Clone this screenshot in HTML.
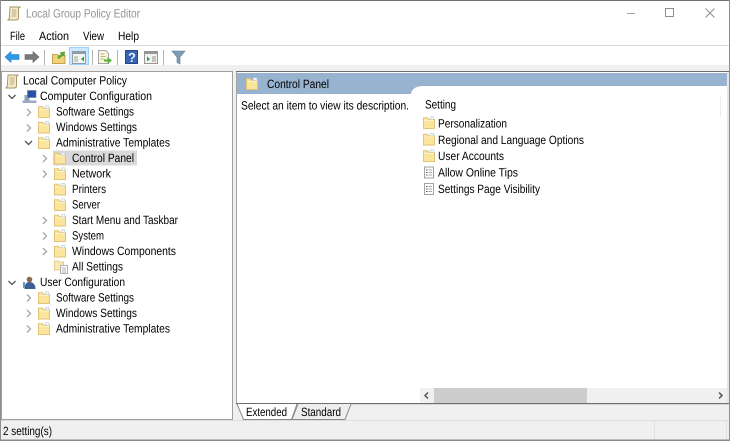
<!DOCTYPE html>
<html><head><meta charset="utf-8"><title>Local Group Policy Editor</title>
<style>
html,body{margin:0;padding:0;background:#fff;width:730px;height:441px;overflow:hidden}
svg{display:block;position:absolute;left:0;top:0;filter:blur(.3px)}
text{font-family:"Liberation Sans",sans-serif;font-size:12px;fill:#000;text-rendering:geometricPrecision}
</style></head><body>
<svg width="730" height="441" viewBox="0 0 730 441" xmlns="http://www.w3.org/2000/svg">
<defs>
<symbol id="f" viewBox="0 0 14 14" width="14" height="14">
<path d="M1.500 12.500V1.800h4l1 1.500h6v9.200z" fill="#fbe49c" stroke="#e0c377"/>
<path d="M8.300 .8h3.500v2.500H8.300z" fill="#f2f7fb" stroke="#c3cfd9" stroke-width=".6"/>
<path d="M2.200 4.400h9.800" stroke="#fdf3cc"/>
</symbol>
<symbol id="d" viewBox="0 0 14 14" width="14" height="14">
<path d="M2.500 1.500h9v11h-9z" fill="#fff" stroke="#a3a3a3"/>
<path d="M4 4.500h1.500M4 7h1.500M4 9.500h1.500" stroke="#555"/>
<path d="M6.500 4.500h3.500M6.500 7h3.500M6.500 9.500h3.500" stroke="#aaa"/>
</symbol>
<symbol id="s" viewBox="0 0 16 16" width="16" height="16">
<path d="M4 1.500h10.500c-1.300.5-2 1.500-2 2.500v8c0 1.500-1 2.500-2.500 2.500H1.500c1.300-.4 1.800-1.300 1.800-2.500z" fill="#f4e8c6" stroke="#a8976c"/>
<path d="M6 4.500h4.500M6 6.500h4.500M6 8.500h4.500M5.500 10.500h4.500" stroke="#a8976c" stroke-width=".8"/>
</symbol>
</defs>

<!-- window -->
<rect width="730" height="441" fill="#f0f0f0"/>
<rect x="0" y="0" width="730" height="1" fill="#6f6f6f"/>
<rect x="1" y="1" width="728" height="44" fill="#fff"/>
<rect x="1" y="45" width="728" height="1" fill="#dadada"/>
<rect x="1" y="46" width="728" height="19" fill="#fff"/>
<rect x="0" y="0" width="1" height="441" fill="#8f8f8f"/>
<rect x="729" y="0" width="1" height="441" fill="#8f8f8f"/>
<rect x="0" y="439.500" width="730" height="1.500" fill="#8a8a8a"/>

<!-- title -->
<use href="#s" x="6" y="5.500"/>
<text x="26" y="17.500" textLength="114" lengthAdjust="spacingAndGlyphs" style="fill:#939393">Local Group Policy Editor</text>
<path d="M627 13.500h8" stroke="#a0a0a0"/>
<rect x="665.500" y="8.500" width="8" height="8" fill="none" stroke="#8f8f8f"/>
<path d="M705.500 8.500l9 9M714.500 8.500l-9 9" stroke="#8f8f8f"/>

<!-- menu -->
<text x="10" y="40" textLength="15" lengthAdjust="spacingAndGlyphs">File</text>
<text x="39" y="40" textLength="30" lengthAdjust="spacingAndGlyphs">Action</text>
<text x="83" y="40" textLength="21" lengthAdjust="spacingAndGlyphs">View</text>
<text x="118" y="40" textLength="21" lengthAdjust="spacingAndGlyphs">Help</text>

<!-- toolbar -->
<path d="M5 57l6-5.500v3h8v5h-8v3z" fill="#2b9be8" stroke="#1f78c4" stroke-width=".6"/>
<path d="M39 57l-6-5.500v3h-8v5h8v3z" fill="#7a7a7a" stroke="#666" stroke-width=".6"/>
<rect x="44" y="50" width="1" height="15" fill="#b5b5b5"/>
<path d="M52.500 63.500v-9h5l1 1h6.500v8z" fill="#f4d27c" stroke="#c9a24f"/>
<path d="M57 57l4-3-1.500-1.500 5.500-1-.5 5.500-1.500-1.500-4 3.500z" fill="#5aa83c"/>
<rect x="69.500" y="47.500" width="19" height="17" fill="#cce8ff" stroke="#99d1ff"/>
<rect x="72.500" y="51.500" width="13" height="12" fill="#f4f4f4" stroke="#8f9caa"/>
<rect x="73" y="52" width="12" height="2" fill="#8f9caa"/>
<rect x="74" y="56" width="4" height="6" fill="#c4d4c4"/>
<path d="M84 56.500v5l-3-2.500z" fill="#2ea043"/>
<rect x="92" y="50" width="1" height="15" fill="#b5b5b5"/>
<path d="M98.500 50.500h7l3 3v10h-10z" fill="#fbf6df" stroke="#a8a8a8"/>
<path d="M100.500 54h4M100.500 56.500h5M100.500 59h4" stroke="#b09a60" stroke-width=".8"/>
<path d="M104 59.500h3.500v-2.500l4.500 3.500-4.500 3.500v-2.500h-3.500z" fill="#59b23f"/>
<rect x="117" y="50" width="1" height="15" fill="#b5b5b5"/>
<rect x="125.500" y="50.500" width="12" height="13" fill="#3564b4" stroke="#24478c"/>
<text x="128" y="62" style="font-size:13px;font-weight:bold;fill:#e8eefa">?</text>
<rect x="144.500" y="51.500" width="13" height="12" fill="#f2f2f2" stroke="#959595"/>
<rect x="145" y="52" width="12" height="2" fill="#959595"/>
<path d="M147 56.500v5l3-2.500z" fill="#2ea043"/>
<rect x="152" y="56" width="4" height="6" fill="#c4c4c4"/>
<rect x="163" y="50" width="1" height="15" fill="#b5b5b5"/>
<path d="M172 51h13l-5 6v7l-3-1.500V57z" fill="#7d9db5" stroke="#5f7f98" stroke-width=".6"/>

<!-- tree panel -->
<rect x="1.500" y="71.500" width="231" height="348" fill="#fff" stroke="#a0a0a0"/>
<!-- right panel -->
<rect x="236" y="71" width="492" height="333" fill="#fff"/>
<rect x="236" y="71" width="1" height="333" fill="#a4a4a4"/>
<rect x="727" y="71" width="2" height="333" fill="#e6e6e6"/>
<rect x="236" y="71" width="493" height="1" fill="#6e6e6e"/>
<path d="M237 73h490v13H424q-12 0-13 8H237z" fill="#98b3d0"/>
<rect x="720" y="95" width="1" height="21" fill="#ececec"/>

<!-- tree -->
<use href="#s" x="4" y="73.500"/>
<text x="23" y="84.500" textLength="104" lengthAdjust="spacingAndGlyphs">Local Computer Policy</text>
<g fill="none" stroke="#555" stroke-width="1.300">
<path d="M8.500 95l3.500 3.500 3.500-3.500M25 141l3.500 3.500 3.500-3.500M8.500 281l3.500 3.500 3.500-3.500"/>
</g>
<g fill="none" stroke="#a6a6a6" stroke-width="1.300">
<path d="M27 109l3.500 3.500-3.500 3.500M27 124.500l3.500 3.500-3.500 3.500M43 155l3.500 3.500-3.500 3.500M43 170.500l3.500 3.500-3.500 3.500M43 217l3.500 3.500-3.500 3.500M43 232.500l3.500 3.500-3.500 3.500M43 248l3.500 3.500-3.500 3.500M27 294.500l3.500 3.500-3.500 3.500M27 310l3.500 3.500-3.500 3.500M27 325.500l3.500 3.500-3.500 3.500"/>
</g>
<!-- computer -->
<rect x="24.500" y="95" width="5" height="7" fill="#8ea0b6"/>
<rect x="27.500" y="90.500" width="8.500" height="7" fill="#2a4fa8" stroke="#6b809a" stroke-width=".7"/>
<path d="M22.500 100.500h14v2.500h-14z" fill="#9bacc0"/>
<text x="40" y="100" textLength="112" lengthAdjust="spacingAndGlyphs">Computer Configuration</text>

<use href="#f" x="37" y="105"/>
<text x="56" y="115.500" textLength="78" lengthAdjust="spacingAndGlyphs">Software Settings</text>
<use href="#f" x="37" y="120.500"/>
<text x="56" y="131" textLength="81" lengthAdjust="spacingAndGlyphs">Windows Settings</text>
<use href="#f" x="37" y="136"/>
<text x="56" y="146.500" textLength="114" lengthAdjust="spacingAndGlyphs">Administrative Templates</text>
<rect x="53" y="150.500" width="84" height="15" fill="#d9d9d9"/>
<use href="#f" x="53" y="151.500"/>
<text x="72" y="162" textLength="62" lengthAdjust="spacingAndGlyphs">Control Panel</text>
<use href="#f" x="53" y="167"/>
<text x="72" y="177.500" textLength="39" lengthAdjust="spacingAndGlyphs">Network</text>
<use href="#f" x="53" y="182.500"/>
<text x="72" y="193" textLength="34" lengthAdjust="spacingAndGlyphs">Printers</text>
<use href="#f" x="53" y="198"/>
<text x="72" y="208.500" textLength="28" lengthAdjust="spacingAndGlyphs">Server</text>
<use href="#f" x="53" y="213.500"/>
<text x="72" y="224" textLength="106" lengthAdjust="spacingAndGlyphs">Start Menu and Taskbar</text>
<use href="#f" x="53" y="229"/>
<text x="72" y="239.500" textLength="32" lengthAdjust="spacingAndGlyphs">System</text>
<use href="#f" x="53" y="244.500"/>
<text x="72" y="255" textLength="104" lengthAdjust="spacingAndGlyphs">Windows Components</text>
<!-- all settings icon -->
<path d="M54.500 270v-9h3.500l1 1h4.500v8z" fill="#fbe9b4" stroke="#e3cd92"/>
<rect x="60.500" y="265.500" width="7" height="8" fill="#fff" stroke="#b0b0b0"/>
<path d="M62 268h4M62 270h4M62 272h4" stroke="#999" stroke-width=".7"/>
<text x="72" y="270.500" textLength="51" lengthAdjust="spacingAndGlyphs">All Settings</text>
<!-- user -->
<circle cx="29.500" cy="279.500" r="2.800" fill="#8a6a4a"/>
<path d="M24.500 289c0-5 2-7 5-7s6 2 6 7z" fill="#3a5f94"/>
<path d="M24 282v6" stroke="#6b96c8" stroke-width="2"/>
<text x="40" y="286" textLength="85" lengthAdjust="spacingAndGlyphs">User Configuration</text>
<use href="#f" x="37" y="291"/>
<text x="56" y="301.500" textLength="78" lengthAdjust="spacingAndGlyphs">Software Settings</text>
<use href="#f" x="37" y="306.500"/>
<text x="56" y="317" textLength="81" lengthAdjust="spacingAndGlyphs">Windows Settings</text>
<use href="#f" x="37" y="322"/>
<text x="56" y="332.500" textLength="114" lengthAdjust="spacingAndGlyphs">Administrative Templates</text>

<!-- right content -->
<use href="#f" x="245" y="77"/>
<text x="267" y="88" textLength="62" lengthAdjust="spacingAndGlyphs">Control Panel</text>
<text x="241" y="109.500" textLength="168" lengthAdjust="spacingAndGlyphs">Select an item to view its description.</text>
<text x="425" y="108.500" textLength="31" lengthAdjust="spacingAndGlyphs">Setting</text>
<use href="#f" x="422" y="116"/>
<text x="438" y="127.500" textLength="69" lengthAdjust="spacingAndGlyphs">Personalization</text>
<use href="#f" x="422" y="132.500"/>
<text x="438" y="144" textLength="146" lengthAdjust="spacingAndGlyphs">Regional and Language Options</text>
<use href="#f" x="422" y="149"/>
<text x="438" y="160" textLength="66" lengthAdjust="spacingAndGlyphs">User Accounts</text>
<use href="#d" x="422" y="165.500"/>
<text x="438" y="176.500" textLength="80" lengthAdjust="spacingAndGlyphs">Allow Online Tips</text>
<use href="#d" x="422" y="182"/>
<text x="438" y="193" textLength="102" lengthAdjust="spacingAndGlyphs">Settings Page Visibility</text>

<!-- h scroll -->
<rect x="420" y="388" width="307" height="15" fill="#f0f0f0"/>
<rect x="434" y="388" width="153" height="15" fill="#cdcdcd"/>
<path d="M428 392.500l-3 3 3 3" fill="none" stroke="#555" stroke-width="1.500"/>
<path d="M719 392.500l3 3-3 3" fill="none" stroke="#555" stroke-width="1.500"/>
<rect x="236" y="403" width="493" height="1.200" fill="#6e6e6e"/>

<!-- tabs -->
<path d="M298 404l-6 15.500h53l6-15.500" fill="#eeeeee" stroke="#8a8a8a"/>
<path d="M237 404l6.500 15.500h48l5.500-15.500z" fill="#fff"/>
<path d="M237 404l6.500 15.500h48l5.500-15.500" fill="none" stroke="#8a8a8a"/>
<text x="246" y="416" textLength="41" lengthAdjust="spacingAndGlyphs">Extended</text>
<text x="301" y="416" textLength="40" lengthAdjust="spacingAndGlyphs">Standard</text>

<!-- status -->
<rect x="1" y="420" width="728" height="1" fill="#dcdcdc"/>
<text x="3" y="435" textLength="49" lengthAdjust="spacingAndGlyphs">2 setting(s)</text>
<rect x="654" y="421" width="1" height="18" fill="#e2e2e2"/>
<rect x="726" y="421" width="1" height="18" fill="#e2e2e2"/>
</svg>
</body></html>
